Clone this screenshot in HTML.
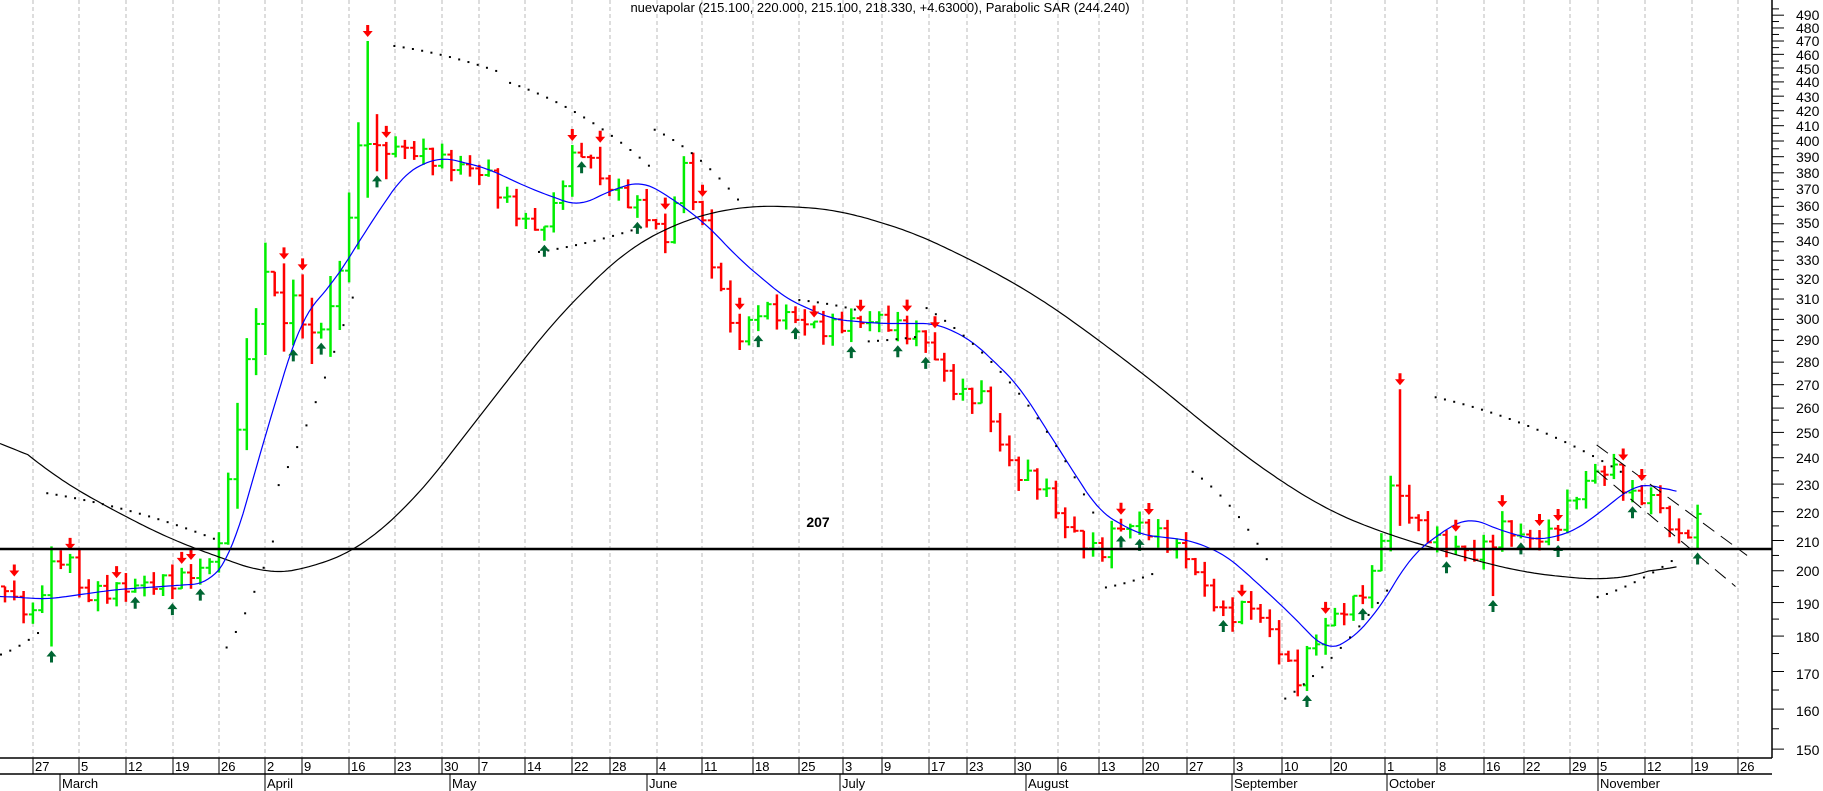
<!DOCTYPE html>
<html><head><meta charset="utf-8"><style>
html,body{margin:0;padding:0;background:#fff;}
body{width:1823px;height:791px;overflow:hidden;position:relative;font-family:"Liberation Sans",Arial,sans-serif;}
svg{position:absolute;left:0;top:0;}
.t{font-size:13px;fill:#000;}
.ax{font-size:14px;fill:#000;}
</style></head><body>
<svg id="s" width="1823" height="791" xmlns="http://www.w3.org/2000/svg">
<g id="grid"></g>
<g id="plot"></g>
<text class="t" x="880" y="12" text-anchor="middle">nuevapolar (215.100, 220.000, 215.100, 218.330, +4.63000), Parabolic SAR (244.240)</text>
<text x="818" y="527" font-size="14" font-weight="bold" text-anchor="middle">207</text>
<line x1="0" y1="549" x2="1772" y2="549" stroke="#000" stroke-width="2.5"/>
<line x1="1772" y1="0" x2="1772" y2="758" stroke="#000" stroke-width="1.5"/>
<line x1="0" y1="758" x2="1772" y2="758" stroke="#000" stroke-width="1.5"/>
<line x1="0" y1="774" x2="1772" y2="774" stroke="#000" stroke-width="1.5"/>
<g id="yax" class="ax">
<text x="1796" y="20">490</text><text x="1796" y="33">480</text><text x="1796" y="46">470</text><text x="1796" y="60">460</text><text x="1796" y="74">450</text><text x="1796" y="87">440</text><text x="1796" y="102">430</text><text x="1796" y="116">420</text><text x="1796" y="131">410</text><text x="1796" y="146">400</text><text x="1796" y="162">390</text><text x="1796" y="178">380</text><text x="1796" y="194">370</text><text x="1796" y="211">360</text><text x="1796" y="228">350</text><text x="1796" y="246">340</text><text x="1796" y="265">330</text><text x="1796" y="284">320</text><text x="1796" y="304">310</text><text x="1796" y="324">300</text><text x="1796" y="345">290</text><text x="1796" y="367">280</text><text x="1796" y="390">270</text><text x="1796" y="413">260</text><text x="1796" y="438">250</text><text x="1796" y="463">240</text><text x="1796" y="490">230</text><text x="1796" y="518">220</text><text x="1796" y="547">210</text><text x="1796" y="576">200</text><text x="1796" y="609">190</text><text x="1796" y="642">180</text><text x="1796" y="679">170</text><text x="1796" y="716">160</text><text x="1796" y="755">150</text>
</g>
<g class="t" id="xax">
<text x="35" y="771">27</text><text x="81" y="771">5</text><text x="128" y="771">12</text><text x="175" y="771">19</text><text x="221" y="771">26</text><text x="267" y="771">2</text><text x="304" y="771">9</text><text x="351" y="771">16</text><text x="397" y="771">23</text><text x="444" y="771">30</text><text x="481" y="771">7</text><text x="527" y="771">14</text><text x="574" y="771">22</text><text x="612" y="771">28</text><text x="659" y="771">4</text><text x="704" y="771">11</text><text x="755" y="771">18</text><text x="801" y="771">25</text><text x="845" y="771">3</text><text x="884" y="771">9</text><text x="931" y="771">17</text><text x="969" y="771">23</text><text x="1017" y="771">30</text><text x="1060" y="771">6</text><text x="1101" y="771">13</text><text x="1145" y="771">20</text><text x="1189" y="771">27</text><text x="1236" y="771">3</text><text x="1284" y="771">10</text><text x="1333" y="771">20</text><text x="1387" y="771">1</text><text x="1439" y="771">8</text><text x="1486" y="771">16</text><text x="1526" y="771">22</text><text x="1572" y="771">29</text><text x="1600" y="771">5</text><text x="1647" y="771">12</text><text x="1694" y="771">19</text><text x="1740" y="771">26</text>
<text x="62" y="788">March</text><text x="267" y="788">April</text><text x="452" y="788">May</text><text x="649" y="788">June</text><text x="842" y="788">July</text><text x="1028" y="788">August</text><text x="1234" y="788">September</text><text x="1389" y="788">October</text><text x="1600" y="788">November</text>
</g>
</svg>
<script>
var NS="http://www.w3.org/2000/svg",S=1.157;
function Y(p){return 141+620*Math.log(400/p);}
function el(g,t,a){var e=document.createElementNS(NS,t);for(var k in a)e.setAttribute(k,a[k]);document.getElementById(g).appendChild(e);return e;}
var grid=[33,79,126,173,219,265,302,349,395,442,479,525,572,610,657,702,753,799,843,882,929,967,1015,1058,1099,1143,1187,1234,1282,1331,1385,1437,1484,1524,1570,1598,1645,1692,1738];
grid.forEach(function(x){el("grid","line",{x1:x,y1:0,x2:x,y2:758,stroke:"#bbb","stroke-dasharray":"4,3"});el("grid","line",{x1:x,y1:758,x2:x,y2:774,stroke:"#000"});});
[60,265,450,647,840,1026,1232,1387,1598].forEach(function(x){el("grid","line",{x1:x,y1:774,x2:x,y2:791,stroke:"#000"});});
for(var p=150;p<=495;p+=5){var y=Y(p);el("grid","line",{x1:1772,y1:y,x2:p%10?1779:1784,y2:y,stroke:"#000"});}
function interp(k,x){for(var i=0;i<k.length-1;i++){if(x<=k[i+1][0]){var t=(x-k[i][0])/(k[i+1][0]-k[i][0]);return Math.exp(Math.log(k[i][1])*(1-t)+Math.log(k[i+1][1])*t);}}return k[k.length-1][1];}
var C=[[0,195],[30,185],[40,200],[60,205],[70,192],[115,195],[155,197],[185,203],[194,220],[210,270],[230,325],[245,300],[255,310],[270,290],[290,310],[305,370],[315,420],[320,390],[330,395],[350,395],[390,385],[420,380],[440,360],[465,345],[480,360],[490,385],[505,395],[520,375],[540,365],[560,355],[575,340],[590,385],[600,365],[615,330],[630,300],[640,290],[655,305],[690,300],[710,295],[730,298],[760,300],[800,290],[815,275],[830,265],[850,265],[860,250],[875,235],[900,230],[920,215],[950,205],[965,215],[985,215],[1000,212],[1025,205],[1040,195],[1060,185],[1080,190],[1100,180],[1120,167],[1130,175],[1150,185],[1170,190],[1190,200],[1200,230],[1210,225],[1225,215],[1240,210],[1275,205],[1290,210],[1300,215],[1320,210],[1340,212],[1360,225],[1380,235],[1395,235],[1410,225],[1430,225],[1450,210],[1468,217]];
var spikes=[[42,208,177],[316,470,365],[1207,268,215],[1290,210,192]];
var prev=195,bars=[];
for(var i=0;i<183;i++){var x=5+i*9.3,px=x/S;var c=interp(C,px)*(1+0.012*Math.sin(i*2.7));var r1=Math.abs(Math.sin(i*1.3)),r2=Math.abs(Math.cos(i*1.9));var amp=(px>190&&px<340)?0.05:0.018;var h=Math.max(c,prev)*(1+amp*r1),l=Math.min(c,prev)*(1-amp*r2);
spikes.forEach(function(s){if(Math.abs(s[0]*S-x)<4.7){h=Math.max(h,s[1]);l=Math.min(l,s[2]);}});
var col=c>=prev?"#00ee00":"#ff0000";bars.push([x,Y(h),Y(l)]);
el("plot","line",{x1:x,y1:Y(h),x2:x,y2:Y(l),stroke:col,"stroke-width":2.5});el("plot","line",{x1:x-4,y1:Y(prev),x2:x,y2:Y(prev),stroke:col,"stroke-width":2});el("plot","line",{x1:x,y1:Y(c),x2:x+4,y2:Y(c),stroke:col,"stroke-width":2});prev=c;}
function curve(k,col,w,win){var pts=[];for(var x=0;x<=k[k.length-1][0];x+=3)pts.push([x,Y(interp(k,x))]);var d="";for(var i=0;i<pts.length;i++){var s=0,n=0;for(var j=Math.max(0,i-win);j<=Math.min(pts.length-1,i+win);j++){s+=pts[j][1];n++;}d+=(d?"L":"M")+(pts[i][0]*S).toFixed(1)+","+(s/n).toFixed(1);}el("plot","path",{d:d,fill:"none",stroke:col,"stroke-width":w});}
curve([[0,250],[50,232],[100,220],[150,210],[200,203],[230,199],[260,200],[310,207],[360,225],[420,260],[480,300],[540,335],[590,352],[640,360],[690,360],[730,357],[790,345],[850,327],[900,310],[950,290],[1000,270],[1050,250],[1100,233],[1150,220],[1200,212],[1260,205],[1310,200],[1350,198],[1390,197],[1420,199],[1450,203]],"#000",1.2,8);
curve([[0,192],[40,191],[100,194],[180,196],[200,205],[230,250],[260,300],[290,320],[320,350],[350,380],[380,390],[420,383],[460,370],[500,360],[530,370],[555,375],[580,365],[610,350],[640,330],[680,310],[720,300],[760,298],[810,298],[840,290],[880,270],[920,240],[950,220],[985,212],[1030,210],[1060,205],[1090,195],[1120,185],[1145,176],[1165,178],[1190,187],[1220,205],[1250,214],[1270,218],[1300,213],[1330,210],[1360,213],[1390,222],[1410,229],[1430,230],[1450,226]],"#0000ff",1.2,4);
var sar=[[0,35,175,182],[40,190,227,210],[195,235,177,210],[240,310,230,322],[340,430,467,448],[440,560,440,385],[465,560,335,350],[565,640,408,362],[690,740,310,305],[750,790,290,292],[800,950,306,215],[955,1000,195,200],[1030,1100,235,200],[1110,1200,163,195],[1240,1400,265,235],[1380,1450,192,205]];
sar.forEach(function(s){for(var x=s[0];x<=s[1];x+=8){var t=(x-s[0])/((s[1]-s[0])||1);var p=s[2]+(s[3]-s[2])*t*t*0.4+(s[3]-s[2])*t*0.6;el("plot","rect",{x:x*S,y:Y(p),width:2,height:2,fill:"#000"});}});
[[1380,245,1510,205],[1380,235,1500,195]].forEach(function(l){el("plot","line",{x1:l[0]*S,y1:Y(l[1]),x2:l[2]*S,y2:Y(l[3]),stroke:"#000","stroke-dasharray":"14,8"});});
var dn=[12,60,98,155,162,243,260,316,332,492,517,577,605,637,701,742,784,806,972,997,1070,1143,1207,1258,1302,1330,1348,1404,1423];
var up=[42,115,148,172,250,277,323,500,467,553,658,685,733,772,797,966,988,1055,1127,1181,1250,1288,1311,1343,1408,1465];
function near(x){var b=bars[0];bars.forEach(function(q){if(Math.abs(q[0]-x)<Math.abs(b[0]-x))b=q;});return b;}
dn.forEach(function(a){var b=near(a*S),x=b[0],y=b[1]-4;el("plot","path",{d:"M"+(x-1.5)+","+(y-12)+"h3v6h3.5l-5,6l-5,-6h3.5z",fill:"#ff0000"});});
up.forEach(function(a){var b=near(a*S),x=b[0],y=b[2]+4;el("plot","path",{d:"M"+x+","+y+"l5,6h-3.5v6h-3v-6h-3.5z",fill:"#006633"});});
</script>
</body></html>
